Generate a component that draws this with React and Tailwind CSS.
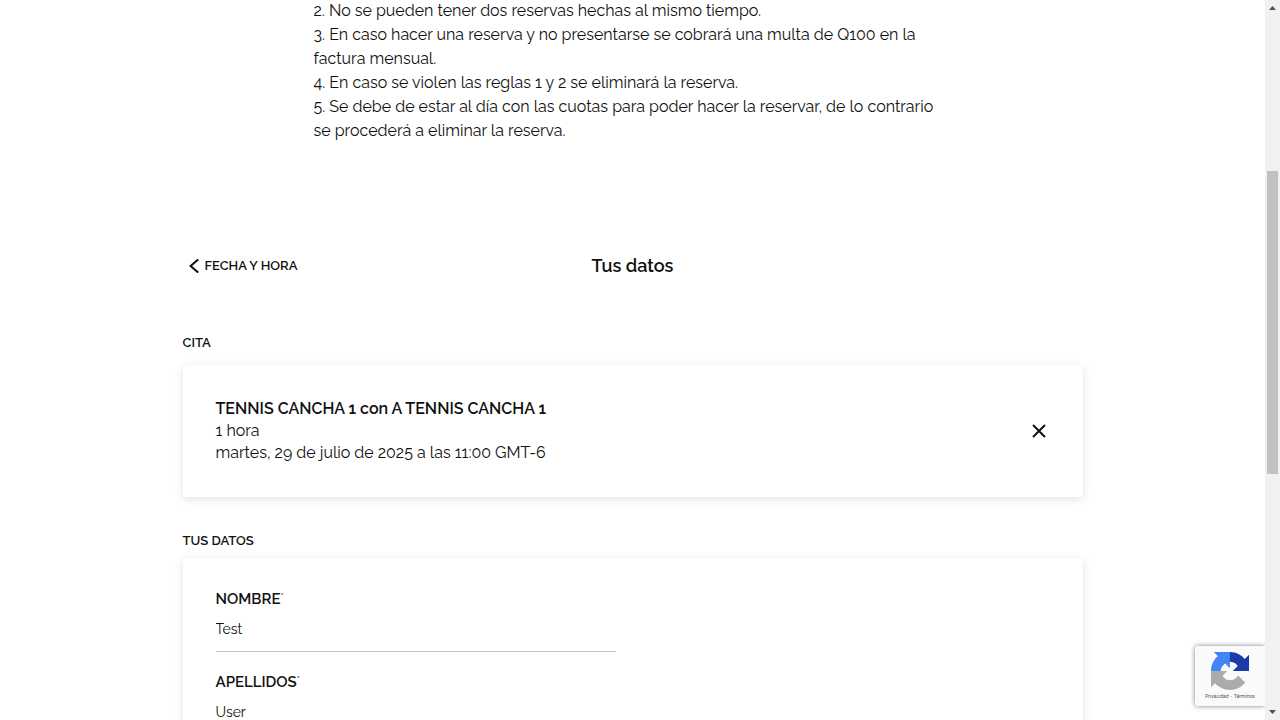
import { useState } from "react";

const rules = [
  "2. No se pueden tener dos reservas hechas al mismo tiempo.",
  "3. En caso hacer una reserva y no presentarse se cobrará una multa de Q100 en la factura mensual.",
  "4. En caso se violen las reglas 1 y 2 se eliminará la reserva.",
  "5. Se debe de estar al día con las cuotas para poder hacer la reservar, de lo contrario se procederá a eliminar la reserva.",
];

function Rules() {
  return (
    <section className="-mt-px mx-auto w-full max-w-[638px] text-base">
      {rules.map((rule) => (
        <p key={rule}>{rule}</p>
      ))}
    </section>
  );
}

function StepHeader() {
  return (
    <header className="mt-[107px] grid h-8 grid-cols-[1fr_auto_1fr] items-center">
      <button type="button" className="flex items-center gap-1 justify-self-start pl-1.5 text-[13px] font-semibold">
        <svg width="12" height="14" viewBox="0 0 12 14" fill="none" stroke="currentColor" strokeWidth="2" aria-hidden="true">
          <path d="M9.2 0.4 1.6 7l7.6 6.6" />
        </svg>
        FECHA Y HORA
      </button>
      <h1 className="text-lg font-semibold">Tus datos</h1>
    </header>
  );
}

function Field({ id, label, value }) {
  const [text, setText] = useState(value);
  return (
    <div className="h-[83px] w-full max-w-[400px]">
      <label htmlFor={id} className="flex h-4 items-start text-[15px] leading-4 font-semibold">
        {label}
        <span className="text-[10px] leading-3 font-semibold text-[#e0002d]">*</span>
      </label>
      <input
        id={id}
        type="text"
        required
        value={text}
        onChange={(event) => setText(event.target.value)}
        className="block h-[45px] w-full border-b border-[#c4c4c4] bg-transparent text-sm outline-none"
      />
    </div>
  );
}

function RecaptchaBadge() {
  return (
    <aside className="absolute right-0 bottom-3.5 flex h-[60px] w-[70px] flex-col items-center rounded-l-xs bg-[#fafafa] pt-1.5 shadow-[0_0_5px_#808080]">
      <svg width="38" height="38" viewBox="0 0 64 64" aria-hidden="true">
        <path fill="#1c3aa9" d="M64 31.955a33 33 0 0 0-.033-1.37V4.687l-7.16 7.16C50.948 4.674 42.033.093 32.05.093c-10.39 0-19.622 4.96-25.458 12.64l11.736 11.86a15.55 15.55 0 0 1 4.754-5.334c2.05-1.6 4.952-2.906 8.968-2.906.485 0 .86.057 1.135.163 4.976.393 9.288 3.14 11.828 7.124l-8.307 8.307L64 31.953" />
        <path fill="#4285f4" d="M31.862.094a33 33 0 0 0-1.37.033H4.594l7.16 7.16C4.58 13.147 0 22.06 0 32.046c0 10.39 4.96 19.622 12.64 25.458L24.5 45.768a15.55 15.55 0 0 1-5.334-4.754c-1.6-2.05-2.906-4.952-2.906-8.968 0-.485.057-.86.163-1.135.393-4.976 3.14-9.288 7.124-11.828l8.307 8.307L31.86.095" />
        <path fill="#ababab" d="M.001 32.045a33 33 0 0 0 .033 1.37v25.898l7.16-7.16c5.86 7.173 14.774 11.754 24.76 11.754 10.39 0 19.622-4.96 25.458-12.64l-11.736-11.86a15.55 15.55 0 0 1-4.754 5.334c-2.05 1.6-4.952 2.906-8.968 2.906-.485 0-.86-.057-1.135-.163-4.976-.393-9.288-3.14-11.828-7.124l8.307-8.307L.001 32.047" />
      </svg>
      <p className="mt-0.5 flex gap-0.5 font-['Roboto',sans-serif] text-[5px] leading-2 whitespace-nowrap text-[#555]">
        <a href="#privacidad">Privacidad</a>
        <span>-</span>
        <a href="#terminos">Términos</a>
      </p>
    </aside>
  );
}

function ScrollTrack() {
  return (
    <div className="flex w-[15px] shrink-0 flex-col items-center bg-[#f1f1f1]" aria-hidden="true">
      <svg width="15" height="15" viewBox="0 0 15 15" className="shrink-0">
        <path d="M4 10h7L7.5 6z" fill="#505050" />
      </svg>
      <div className="grow-[156]" />
      <div className="w-[11px] grow-[303] bg-[#c1c1c1]" />
      <div className="grow-[231]" />
      <svg width="15" height="15" viewBox="0 0 15 15" className="shrink-0">
        <path d="M4 5h7L7.5 9z" fill="#505050" />
      </svg>
    </div>
  );
}

export default function App() {
  return (
    <div className="flex h-screen overflow-hidden bg-white font-['Raleway','Lato',sans-serif] text-[#111]">
      <div className="relative min-w-0 grow overflow-hidden">
        <Rules />
        <main className="mx-auto w-full max-w-[900px]">
          <StepHeader />

          <h2 className="mt-[53px] text-[13px] leading-4 font-semibold">CITA</h2>
          <section className="mt-3.5 flex items-center justify-between rounded-xs px-[33px] py-[33px] shadow-[0_2px_8px_rgba(0,0,0,0.12)]">
            <div className="text-base leading-[22px]">
              <h3 className="font-semibold">TENNIS CANCHA 1 con A TENNIS CANCHA 1</h3>
              <p>1 hora</p>
              <p>martes, 29 de julio de 2025 a las 11:00 GMT-6</p>
            </div>
            <button type="button" aria-label="Quitar cita" className="p-1">
              <svg width="14" height="14" viewBox="0 0 14 14" fill="none" stroke="currentColor" strokeWidth="2" aria-hidden="true">
                <path d="M1 1l12 12M13 1 1 13" />
              </svg>
            </button>
          </section>

          <h2 className="mt-9 text-[13px] leading-4 font-semibold">TUS DATOS</h2>
          <form className="mt-[9px] rounded-xs px-[33px] pt-[33px] pb-8 shadow-[0_2px_8px_rgba(0,0,0,0.12)]">
            <Field id="nombre" label="NOMBRE" value="Test" />
            <Field id="apellidos" label="APELLIDOS" value="User" />
          </form>
        </main>
        <RecaptchaBadge />
      </div>
      <ScrollTrack />
    </div>
  );
}
